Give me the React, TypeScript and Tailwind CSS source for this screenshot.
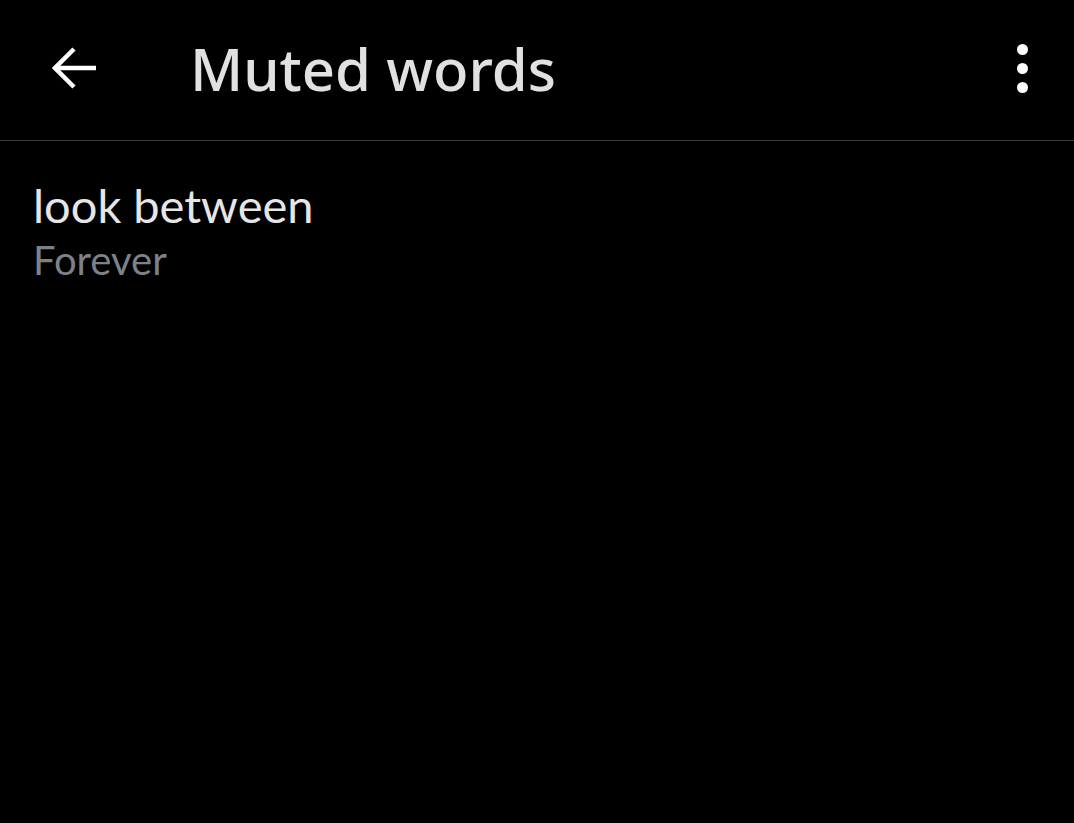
import React from "react";

export default function App() {
  return (
    <div className="w-[1074px] h-[823px] bg-black overflow-hidden" style={{ fontFamily: '"Noto Sans", sans-serif' }}>
      <div className="h-[141px] flex items-center border-b border-[#3a3a3a]">
        <div className="w-[148px] flex justify-center">
          <svg width="44" height="42" viewBox="0 0 44 42" fill="none" stroke="#ffffff" strokeWidth="4.5" strokeLinecap="butt" className="-mt-[4px]">
            <path d="M3 21 H44" />
            <path d="M22 2 L3 21 L22 40" />
          </svg>
        </div>
        <div className="pl-[42px] text-[58px] font-medium text-[#e1e1e1] leading-none -mt-[2px]">Muted words</div>
        <div className="ml-auto mr-[46px] flex flex-col gap-[8px] -mt-[4px]">
          <div className="w-[11px] h-[11px] rounded-full bg-white" />
          <div className="w-[11px] h-[11px] rounded-full bg-white" />
          <div className="w-[11px] h-[11px] rounded-full bg-white" />
        </div>
      </div>
      <div className="pl-[33px] pt-[34px]" style={{ fontFamily: "Lato, sans-serif" }}>
        <div className="text-[47px] leading-[60px] text-[#e6e6e6]">look between</div>
        <div className="text-[40px] leading-[50px] text-[#7d8288]">Forever</div>
      </div>
    </div>
  );
}
